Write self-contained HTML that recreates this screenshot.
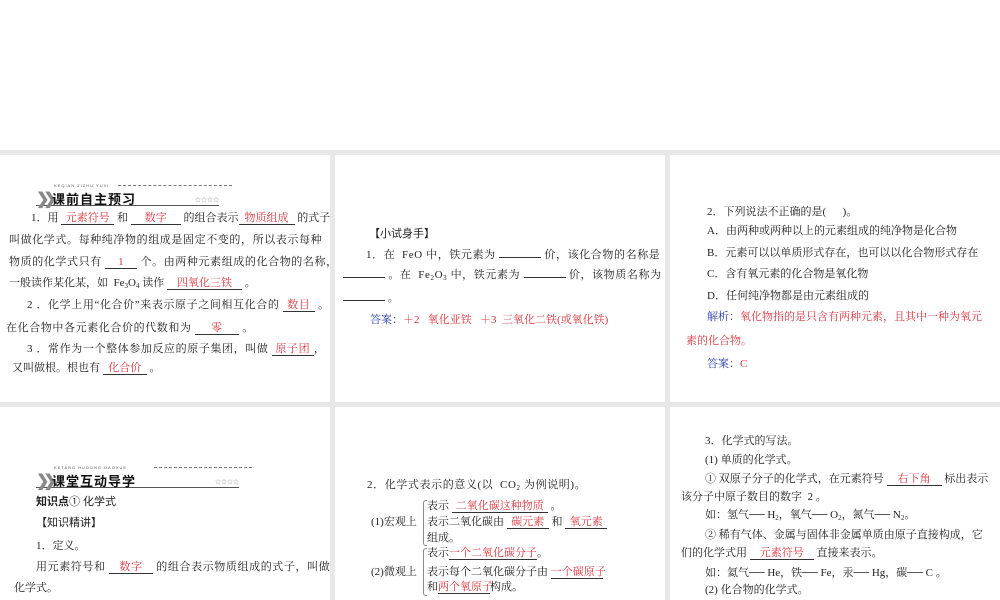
<!DOCTYPE html>
<html><head><meta charset="utf-8"><style>
body{margin:0;width:1000px;height:600px;overflow:hidden;background:#fff;position:relative;font-family:"Liberation Serif","Noto Serif CJK SC","Noto Sans CJK SC",serif;color:#222}
.bg{position:absolute;left:0;top:150px;width:1000px;height:450px;background:#e8e8e8}
.p{position:absolute;background:#fff}
.l{position:absolute;white-space:nowrap;font-size:11px;line-height:14px}
.u{display:inline-block;border-bottom:1px solid #333;color:#d9363e;text-align:center;line-height:12px}
.r{color:#d9363e}
.b{color:#2b3fb0}
.s{font-family:"Liberation Sans","Noto Sans CJK SC",sans-serif}
sub{font-size:7px;vertical-align:-2px}
.hd{position:absolute;border-bottom:1px solid #555}
.hd .ar{position:absolute;left:0;top:3px;font-size:16px;font-weight:bold;color:#888;letter-spacing:-6px;font-family:"Liberation Sans",sans-serif}
.hd .t{position:absolute;left:16px;top:3px;font-size:13px;font-weight:bold;color:#111;font-family:"Noto Sans CJK SC",sans-serif;letter-spacing:1px}
.hd .sm{position:absolute;left:18px;top:-3px;font-size:4px;color:#555;letter-spacing:1px;font-family:"Liberation Sans",sans-serif}
.hd .st{position:absolute;right:0;top:9px;font-size:6px;color:#999}
.hd .dl{position:absolute;top:-1px;height:0;border-top:1px dashed #777}
.br{position:absolute;border:1px solid #888;border-right:none;width:3px;border-radius:3px 0 0 3px}
.w{letter-spacing:0.6px}
</style></head><body>
<div class="bg"></div>
<div class="p" style="left:0;top:155px;width:330px;height:247px"></div>
<div class="p" style="left:335px;top:155px;width:330px;height:247px"></div>
<div class="p" style="left:670px;top:155px;width:330px;height:247px"></div>
<div class="p" style="left:0;top:407px;width:330px;height:193px"></div>
<div class="p" style="left:335px;top:407px;width:330px;height:193px"></div>
<div class="p" style="left:670px;top:407px;width:330px;height:193px"></div>

<!-- left top -->
<div class="hd" style="left:36px;top:186px;width:183px;height:19px">
<span class="ar">❯❯</span><span class="sm">KEQIAN ZIZHU YUXI</span><span class="dl" style="left:82px;width:114px"></span><span class="t">课前自主预习</span><span class="st">☆☆☆☆</span></div>
<div class="l" style="left:31px;top:211px">1．用 <span class="u" style="width:53px">元素符号</span> 和 <span class="u" style="width:50px">数字</span> 的组合表示<span class="u" style="width:56px">物质组成</span> 的式子</div>
<div class="l w" style="left:9px;top:233px">叫做化学式。每种纯净物的组成是固定不变的，所以表示每种</div>
<div class="l w" style="left:9px;top:255px">物质的化学式只有 <span class="u" style="width:32px">1</span> 个。由两种元素组成的化合物的名称，</div>
<div class="l" style="left:9px;top:276px">一般读作某化某，如 &nbsp;Fe<sub>3</sub>O<sub>4</sub> 读作 <span class="u" style="width:75px">四氧化三铁</span> 。</div>
<div class="l w" style="left:27px;top:298px">2 ．化学上用“化合价”来表示原子之间相互化合的 <span class="u" style="width:32px">数目</span> 。</div>
<div class="l w" style="left:6px;top:321px">在化合物中各元素化合价的代数和为 <span class="u" style="width:44px">零</span> 。</div>
<div class="l w" style="left:27px;top:342px">3 ．常作为一个整体参加反应的原子集团，叫做 <span class="u" style="width:42px">原子团</span>，</div>
<div class="l" style="left:12px;top:361px">又叫做根。根也有 <span class="u" style="width:44px">化合价</span> 。</div>

<!-- middle top -->
<div class="l s" style="left:369px;top:227px">【小试身手】</div>
<div class="l w" style="left:366px;top:248px">1．在 &nbsp;FeO 中，铁元素为 <span class="u" style="width:42px"></span> 价，该化合物的名称是</div>
<div class="l w" style="left:343px;top:268px"><span class="u" style="width:42px"></span> 。在 &nbsp;Fe<sub>2</sub>O<sub>3</sub> 中，铁元素为 <span class="u" style="width:42px"></span> 价，该物质名称为</div>
<div class="l" style="left:343px;top:291px"><span class="u" style="width:42px"></span> 。</div>
<div class="l" style="left:370px;top:313px"><span class="b">答案：</span><span class="r">＋2 &nbsp;&nbsp;氧化亚铁 &nbsp;&nbsp;＋3 &nbsp;三氧化二铁(或氧化铁)</span></div>

<!-- right top -->
<div class="l" style="left:707px;top:205px">2．下列说法不正确的是( &nbsp;&nbsp;&nbsp;&nbsp;&nbsp;)。</div>
<div class="l" style="left:707px;top:224px">A．由两种或两种以上的元素组成的纯净物是化合物</div>
<div class="l" style="left:707px;top:246px">B．元素可以以单质形式存在，也可以以化合物形式存在</div>
<div class="l" style="left:707px;top:267px">C．含有氧元素的化合物是氧化物</div>
<div class="l" style="left:707px;top:289px">D．任何纯净物都是由元素组成的</div>
<div class="l" style="left:707px;top:310px"><span class="b">解析：</span><span class="r">氧化物指的是只含有两种元素，且其中一种为氧元</span></div>
<div class="l r" style="left:686px;top:334px">素的化合物。</div>
<div class="l" style="left:707px;top:357px"><span class="b">答案：</span><span class="r">C</span></div>

<!-- left bottom -->
<div class="hd" style="left:36px;top:468px;width:203px;height:19px">
<span class="ar">❯❯</span><span class="sm">KETANG HUDONG DAOXUE</span><span class="dl" style="left:118px;width:98px"></span><span class="t">课堂互动导学</span><span class="st">☆☆☆☆</span></div>
<div class="l s" style="left:36px;top:495px;font-weight:bold">知识点<span style="font-weight:normal">① 化学式</span></div>
<div class="l s" style="left:36px;top:516px">【知识精讲】</div>
<div class="l" style="left:36px;top:539px">1．定义。</div>
<div class="l w" style="left:36px;top:560px">用元素符号和 <span class="u" style="width:44px">数字</span> 的组合表示物质组成的式子，叫做</div>
<div class="l" style="left:14px;top:581px">化学式。</div>

<!-- middle bottom -->
<div class="l w" style="left:367px;top:478px">2．化学式表示的意义(以 &nbsp;CO<sub>2</sub> 为例说明)。</div>
<div class="br" style="left:423px;top:500px;height:44px"></div>
<div class="l" style="left:371px;top:515px">(1)宏观上</div>
<div class="l" style="left:427px;top:499px">表示 <span class="u" style="width:96px">二氧化碳这种物质</span> 。</div>
<div class="l" style="left:427px;top:515px">表示二氧化碳由 <span class="u" style="width:42px">碳元素</span> 和 <span class="u" style="width:42px">氧元素</span></div>
<div class="l" style="left:427px;top:531px">组成。</div>
<div class="br" style="left:423px;top:548px;height:46px"></div>
<div class="l" style="left:371px;top:565px">(2)微观上</div>
<div class="l" style="left:427px;top:546px">表示<span class="u" style="width:88px">一个二氧化碳分子</span>。</div>
<div class="l" style="left:427px;top:565px">表示每个二氧化碳分子由 <span class="u" style="width:52px">一个碳原子</span></div>
<div class="l" style="left:427px;top:580px">和<span class="u" style="width:52px">两个氧原子</span>构成。</div>

<!-- right bottom -->
<div class="l" style="left:705px;top:434px">3．化学式的写法。</div>
<div class="l" style="left:705px;top:453px">(1) 单质的化学式。</div>
<div class="l" style="left:705px;top:472px">① 双原子分子的化学式，在元素符号 <span class="u" style="width:55px">右下角</span> 标出表示</div>
<div class="l" style="left:681px;top:490px">该分子中原子数目的数字 &nbsp;2 。</div>
<div class="l" style="left:705px;top:508px">如：氢气── H<sub>2</sub>，氧气── O<sub>2</sub>，氮气── N<sub>2</sub>。</div>
<div class="l" style="left:705px;top:528px">② 稀有气体、金属与固体非金属单质由原子直接构成，它</div>
<div class="l" style="left:681px;top:546px">们的化学式用 <span class="u" style="width:64px">元素符号</span> 直接来表示。</div>
<div class="l" style="left:705px;top:566px">如：氦气── He，铁── Fe，汞── Hg，碳── C 。</div>
<div class="l" style="left:705px;top:583px">(2) 化合物的化学式。</div>
</body></html>
